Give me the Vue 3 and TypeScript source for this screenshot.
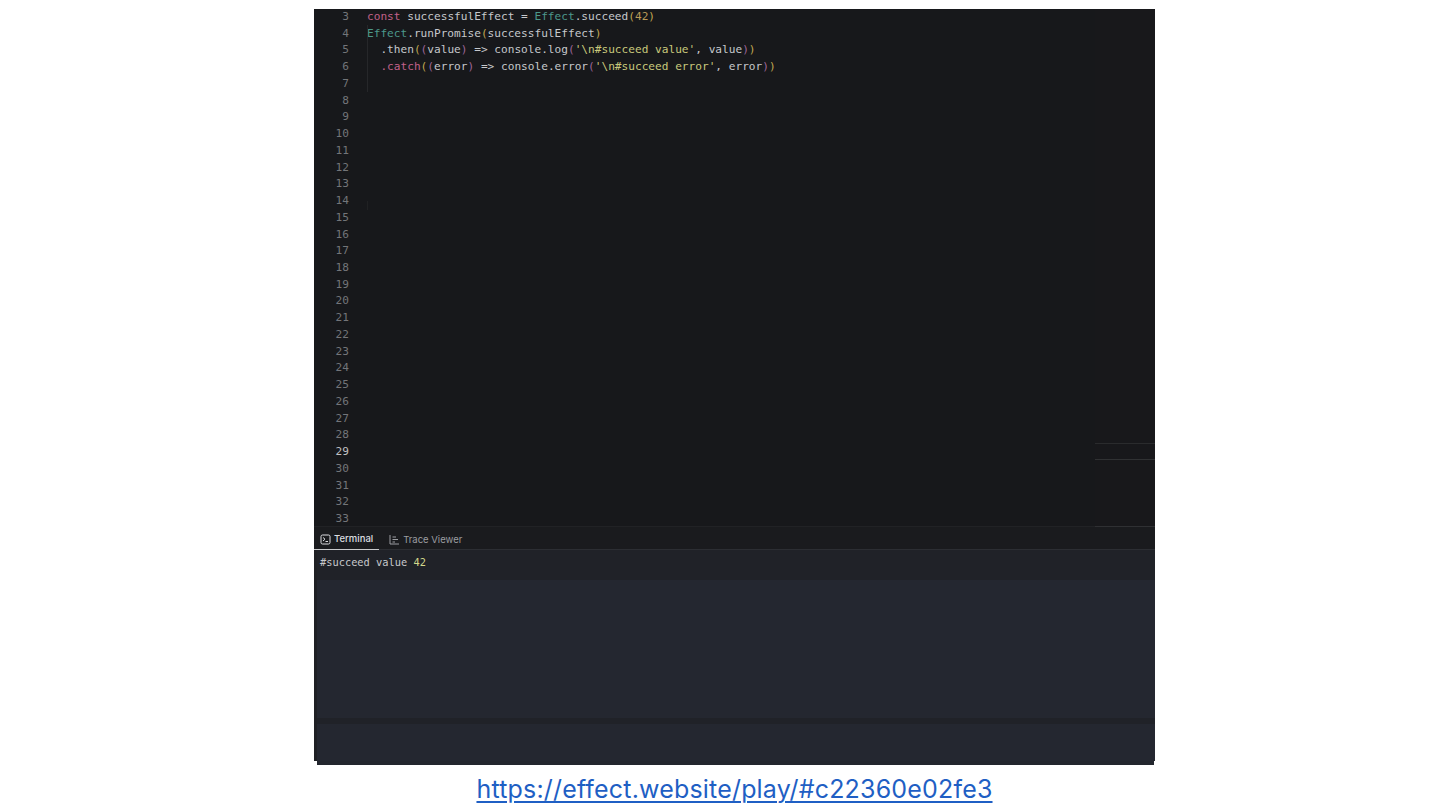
<script setup lang="ts">
type Tok = { t: string; c?: string }
const code: Tok[][] = [
  [{ t: 'const', c: 'kw' }, { t: ' successfulEffect = ' }, { t: 'Effect', c: 'ty' }, { t: '.succeed' }, { t: '(', c: 'br' }, { t: '42', c: 'num' }, { t: ')', c: 'br' }],
  [{ t: 'Effect', c: 'ty' }, { t: '.runPromise' }, { t: '(', c: 'br' }, { t: 'successfulEffect' }, { t: ')', c: 'br' }],
  [{ t: '  .then' }, { t: '(', c: 'br' }, { t: '(', c: 'br2' }, { t: 'value' }, { t: ')', c: 'br2' }, { t: ' => console.log' }, { t: '(', c: 'br2' }, { t: "'\\n#succeed value'", c: 'str' }, { t: ', value' }, { t: ')', c: 'br2' }, { t: ')', c: 'br' }],
  [{ t: '  ' }, { t: '.catch', c: 'kw' }, { t: '(', c: 'br' }, { t: '(', c: 'br2' }, { t: 'error' }, { t: ')', c: 'br2' }, { t: ' => console.error' }, { t: '(', c: 'br2' }, { t: "'\\n#succeed error'", c: 'str' }, { t: ', error' }, { t: ')', c: 'br2' }, { t: ')', c: 'br' }],
]
const lines = Array.from({ length: 31 }, (_, i) => i + 3)
</script>

<template>
  <div class="page">
    <div class="shot">
      <div class="editor">
        <div class="gutter">
          <div v-for="n in lines" :key="n" class="num-line" :class="{ current: n === 29 }">{{ n }}</div>
        </div>
        <div class="code">
          <div v-for="(line, i) in code" :key="i" class="line">
            <span v-for="(tok, j) in line" :key="j" :class="tok.c">{{ tok.t }}</span>
          </div>
          <i class="guide"></i>
          <i class="guide lower"></i>
        </div>
        <div class="minimap">
          <div class="mark first"></div>
          <div class="mark second"></div>
        </div>
      </div>
      <div class="tabs">
        <div class="tab active">
          <svg width="11" height="11" viewBox="0 0 11 11" fill="none" stroke="currentColor" stroke-width="1">
            <rect x="1" y="1" width="9" height="9" rx="1.5" />
            <path d="M3 3.5 5 5.2 3 7M5.5 7.5H8" />
          </svg>
          Terminal
        </div>
        <div class="tab">
          <svg width="11" height="11" viewBox="0 0 11 11" fill="none" stroke="currentColor" stroke-width="1">
            <path d="M1 1v9h9M3.5 3H7M3.5 5.5H9M3.5 8H6" />
          </svg>
          Trace Viewer
        </div>
      </div>
      <div class="terminal">
        <div class="output">#succeed value <span class="val">42</span></div>
        <div class="fill"></div>
        <div class="band"></div>
        <div class="rest"></div>
      </div>
      <div class="lip"></div>
    </div>
    <a class="link" href="#">https://effect.website/play/#c22360e02fe3</a>
  </div>
</template>

<style>
html, body { margin: 0; background: #fff; }
</style>

<style scoped>
.page {
  width: 1440px;
  height: 810px;
  box-sizing: border-box;
  padding: 9px 0 0 29px;
  display: flex;
  flex-direction: column;
  align-items: center;
  overflow: hidden;
  background: #fff;
}
.shot {
  width: 841px;
  height: 756px;
  display: flex;
  flex-direction: column;
}
.editor {
  height: 518px;
  flex: none;
  display: flex;
  background: #17181b;
  font: 11.13px/16.74px "DejaVu Sans Mono", monospace;
  overflow: hidden;
}
.gutter {
  width: 53px;
  flex: none;
  box-sizing: border-box;
  padding-right: 18px;
  color: #737579;
  text-align: right;
  border-bottom: 1px solid #212225;
}
.num-line { height: 16.74px; }
.num-line.current { color: #c0c1c3; }
.code {
  flex: 1;
  position: relative;
  color: #c6c8cc;
  white-space: pre;
  border-bottom: 1px solid #212225;
}
.line { height: 16.74px; }
.guide {
  position: absolute;
  left: 0;
  top: 16px;
  width: 1px;
  height: 67px;
  background: #26272a;
}
.guide.lower { top: 192px; height: 9px; background: #202123; }
.kw { color: #c2618a; }
.ty { color: #4c988b; }
.br { color: #c2a851; }
.br2 { color: #9f6698; }
.num { color: #b89a58; }
.str { color: #c9c97c; }
.minimap {
  width: 60px;
  flex: none;
  position: relative;
  background: #18181b;
  box-sizing: border-box;
  border-bottom: 1px solid #2f3033;
}
.mark {
  position: absolute;
  left: 0;
  right: 0;
  height: 1px;
}
.mark.first { top: 434px; background: #2a2b2d; }
.mark.second { top: 450px; background: #303133; }
.tabs {
  height: 23px;
  flex: none;
  display: flex;
  background: #1a1b1e;
  border-bottom: 1px solid #2c2e33;
  box-sizing: border-box;
  font: 400 9.5px/22px Inter, sans-serif;
  color: #9b9da1;
}
.tab {
  display: flex;
  align-items: center;
  gap: 3px;
  padding: 2px 6px 0;
  height: 23px;
  box-sizing: border-box;
}
.tab + .tab { padding-left: 5px; margin-left: 5px; }
.tab.active {
  color: #dcdde0;
  font-weight: 500;
  border-bottom: 1px solid #c9cacc;
}
.terminal {
  flex: 1;
  display: flex;
  flex-direction: column;
  min-height: 0;
  border-left: 3px solid #1f2024;
  background: #23262e;
}
.output {
  height: 30px;
  flex: none;
  box-sizing: border-box;
  padding: 6px 0 0 3px;
  background: #202228;
  color: #c8c9cc;
  font: 10.35px/13px "DejaVu Sans Mono", monospace;
  white-space: pre;
}
.val { color: #d3d98c; }
.fill { height: 138px; flex: none; background: #242730; }
.band { height: 6px; flex: none; background: #202228; }
.rest { flex: 1; background: #242730; }
.lip { height: 4px; flex: none; background: #23262e; margin: 0 1px 0 3px; }
.link {
  margin-top: 9px;
  color: #1f5fc4;
  font: 400 25px/30px Inter, sans-serif;
  letter-spacing: 0.18px;
  text-decoration: underline;
  text-decoration-thickness: 2px;
  text-underline-offset: 3px;
  white-space: nowrap;
}
</style>
